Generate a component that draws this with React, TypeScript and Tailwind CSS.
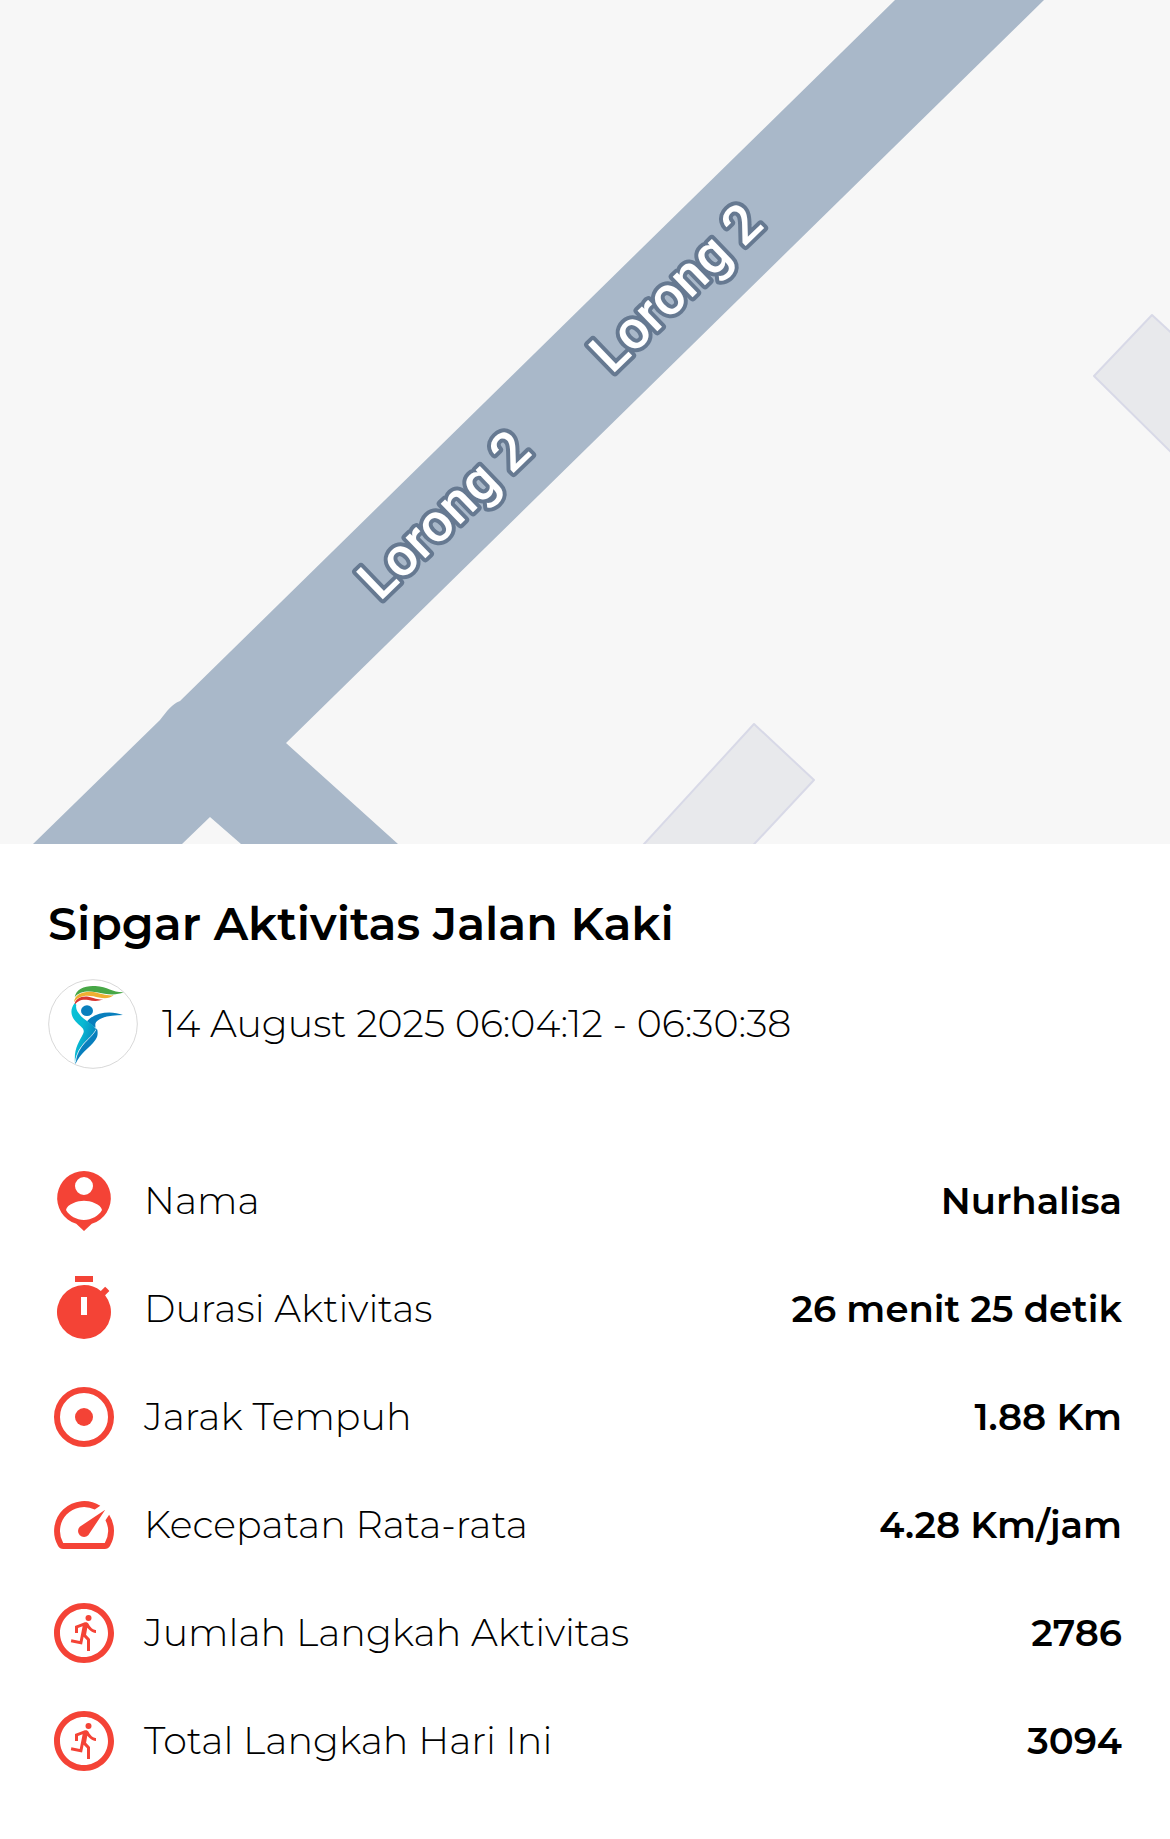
import { ReactNode } from "react";
import { MdOutlineRunCircle, MdSpeed } from "react-icons/md";

interface IStat {
  label: string;
  value: string;
  icon: ReactNode;
}

const PersonPinIcon = () => (
  <svg viewBox="0 0 24 24" fill="currentColor" className="size-full">
    <path
      fillRule="evenodd"
      d="M12 2a9 9 0 0 0-2.6 17.6L12 22l2.6-2.4A9 9 0 0 0 12 2zm0 2a3 3 0 1 1 0 6 3 3 0 0 1 0-6zm0 14.3c-2.5 0-4.9-1.3-6-3.3.3-2 4-3.1 6-3.1s5.7 1.1 6 3.1c-1.1 2-3.5 3.3-6 3.3z"
    />
  </svg>
);

const StopwatchIcon = () => (
  <svg viewBox="0 0 24 24" fill="currentColor" className="size-full">
    <path
      fillRule="evenodd"
      d="M15 1H9v2h6V1zm-4 13h2V8h-2v6zm8.03-6.61l1.42-1.42c-.43-.51-.9-.99-1.41-1.41l-1.42 1.42A8.96 8.96 0 0 0 12 4a9 9 0 1 0 7.03 3.39z"
    />
  </svg>
);

const TargetIcon = () => (
  <svg viewBox="0 0 24 24" className="size-full">
    <circle
      cx="12"
      cy="12"
      r="9"
      fill="none"
      stroke="currentColor"
      strokeWidth="2"
    />
    <circle cx="12" cy="12" r="3" fill="currentColor" />
  </svg>
);

const stats: IStat[] = [
  { label: "Nama", value: "Nurhalisa", icon: <PersonPinIcon /> },
  {
    label: "Durasi Aktivitas",
    value: "26 menit 25 detik",
    icon: <StopwatchIcon />,
  },
  { label: "Jarak Tempuh", value: "1.88 Km", icon: <TargetIcon /> },
  {
    label: "Kecepatan Rata-rata",
    value: "4.28 Km/jam",
    icon: <MdSpeed className="size-full" />,
  },
  {
    label: "Jumlah Langkah Aktivitas",
    value: "2786",
    icon: <MdOutlineRunCircle className="size-full" />,
  },
  {
    label: "Total Langkah Hari Ini",
    value: "3094",
    icon: <MdOutlineRunCircle className="size-full" />,
  },
];

const RoadLabel = ({ x, y }: { x: number; y: number }) => (
  <text
    transform={`translate(${x} ${y}) rotate(-44)`}
    className="fill-white stroke-[#667991] font-['Roboto',sans-serif] text-[54px] font-medium"
    strokeWidth="8"
    strokeLinejoin="round"
    paintOrder="stroke"
  >
    Lorong 2
  </text>
);

const RouteMap = () => (
  <svg viewBox="0 0 1170 844" className="block h-auto w-full bg-[#f7f7f7]">
    {/* Buildings */}
    <g fill="#e8e9ec" stroke="#d8d9e7" strokeWidth="2" strokeLinejoin="round">
      <path d="M754 724L814 780L744 855H634z" />
      <path d="M1152 315L1094 376L1180 461V341z" />
    </g>
    {/* Road */}
    <path
      fill="#a9b8c9"
      d="M895 0L180 701C172 704 167 711 160 720L33 844H182L210 817L241 844H398L286 743L1044 0z"
    />
    <RoadLabel x={612} y={375} />
    <RoadLabel x={380} y={602} />
  </svg>
);

const Logo = () => (
  <svg viewBox="54 57 270 270" className="size-[90px] shrink-0">
    <defs>
      <linearGradient id="ribbon" x1="0" y1="0" x2="1" y2="0.6">
        <stop offset="0" stopColor="#0bc4d8" />
        <stop offset="0.5" stopColor="#08b8d2" />
        <stop offset="1" stopColor="#0784bd" />
      </linearGradient>
    </defs>
    <circle
      cx="189"
      cy="192"
      r="133"
      fill="#fff"
      stroke="#c4c4c4"
      strokeWidth="2"
    />
    {/* Flame */}
    <path
      fill="#47a746"
      d="M134 112C138 86 166 76 196 78C234 80 248 98 281 97C256 108 226 102 200 97C170 92 148 95 134 112z"
    />
    <path
      fill="#efaf32"
      d="M132 127C134 101 163 92 190 96C215 101 230 108 251 106C235 120 210 114 190 109C162 104 143 111 132 127z"
    />
    <path
      fill="#d9352f"
      d="M133 137C134 115 155 107 175 110C195 115 205 119 219 118C205 125 190 124 175 120C155 117 142 122 133 137z"
    />
    {/* Figure */}
    <ellipse cx="171" cy="152" rx="18" ry="16" fill="#087fbd" />
    <path
      fill="#087fbd"
      d="M279 165C245 151 196 155 171 184C180 193 193 199 202 209C204 221 203 231 196 240C176 267 152 277 136 313C138 262 178 238 195 211C199 199 193 196 198 187C213 168 248 166 279 165z"
    />
    <path
      fill="url(#ribbon)"
      d="M134 130C117 151 124 173 142 190C156 203 166 208 159 222C147 246 131 266 135 310C141 257 178 238 197 211C197 194 166 184 152 167C142 155 136 146 139 134z"
    />
    <path
      fill="none"
      stroke="#fff"
      strokeWidth="2"
      d="M198 209C184 237 143 253 136 306"
    />
  </svg>
);

const App = () => {
  return (
    <main className="min-h-screen bg-white font-['Montserrat','Inter',sans-serif] text-black">
      <RouteMap />

      <section className="px-12 pt-12 pb-11">
        {/* Header */}
        <h1 className="text-[46px] leading-[64px] font-semibold">
          Sipgar Aktivitas Jalan Kaki
        </h1>
        <div className="mt-[23px] flex items-center gap-6">
          <Logo />
          <p className="text-[38px] leading-[50px] font-light">
            14 August 2025 06:04:12 - 06:30:38
          </p>
        </div>

        {/* Stats */}
        <dl className="mt-[78px]">
          {stats.map((stat) => (
            <div
              key={stat.label}
              className="flex h-[108px] items-center justify-between leading-[50px]"
            >
              <dt className="flex items-center gap-6 text-[38px] font-light">
                <span className="size-[72px] shrink-0 text-[#f44336]">
                  {stat.icon}
                </span>
                {stat.label}
              </dt>
              <dd className="text-[37px] font-semibold">{stat.value}</dd>
            </div>
          ))}
        </dl>
      </section>
    </main>
  );
};

export default App;
